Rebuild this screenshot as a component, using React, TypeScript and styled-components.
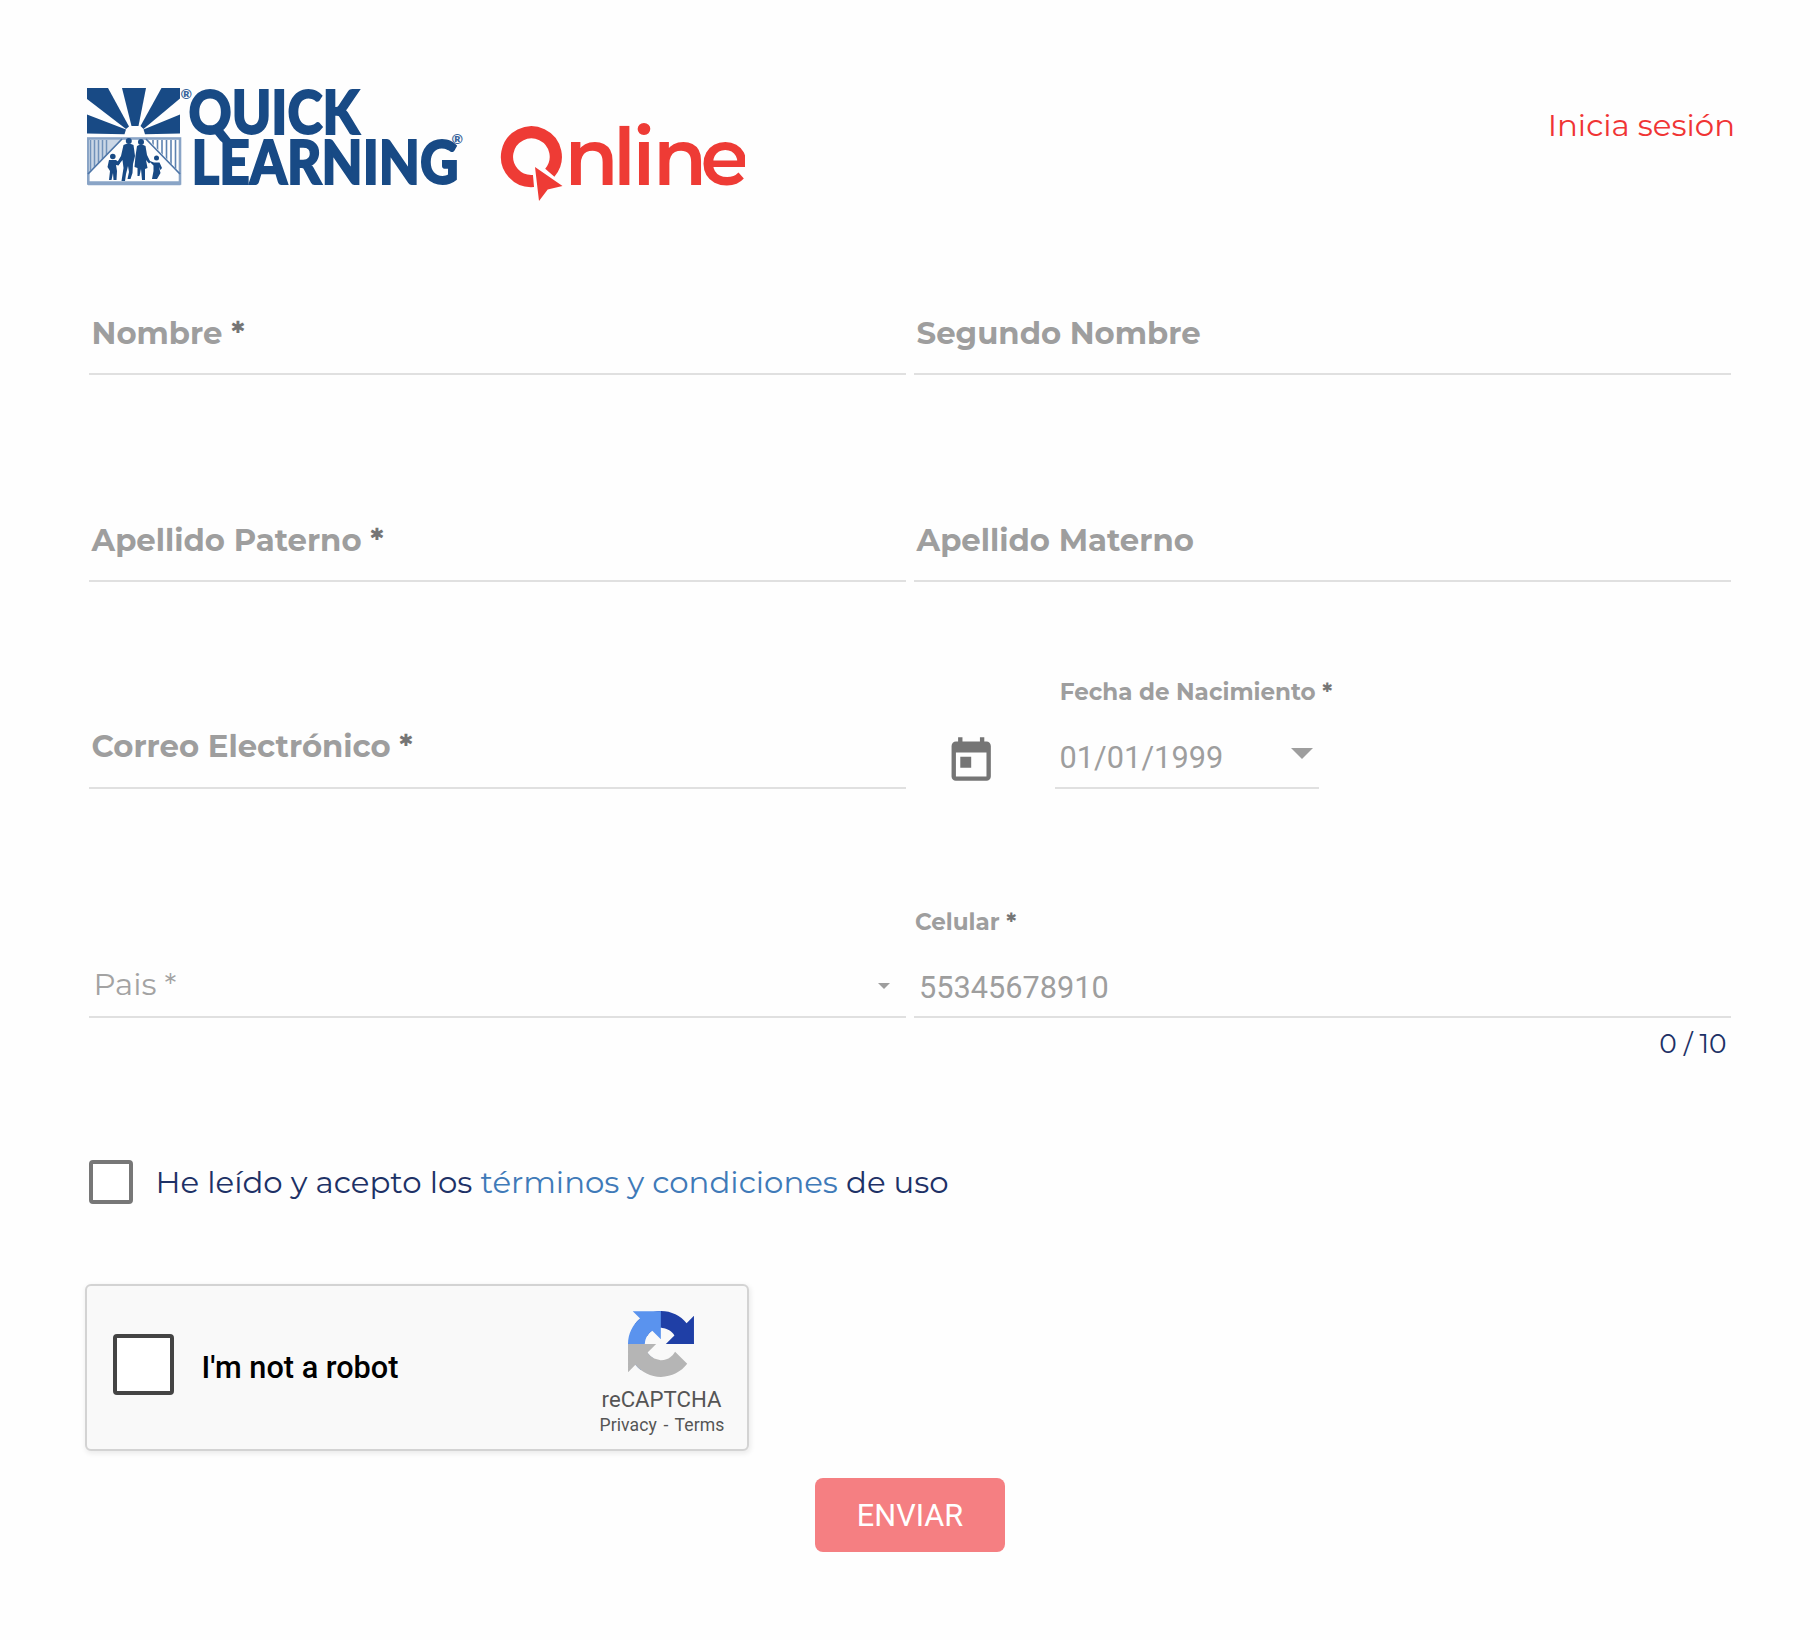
import React from 'react';
import styled, { createGlobalStyle } from 'styled-components';

const sans = `Montserrat, Inter, "Open Sans", sans-serif`;
const roboto = `Roboto, "Liberation Sans", sans-serif`;

const GlobalStyle = createGlobalStyle`
  * { box-sizing: border-box; }
  body { margin: 0; background: #fefefe; font-family: ${sans}; }
`;

const Page = styled.main`
  width: 1820px;
  height: 1640px;
  overflow: hidden;
`;

const Header = styled.header`
  display: flex;
  justify-content: space-between;
  align-items: flex-start;
  height: 240px;
  padding: 80px 85px 0 80px;
`;

const LoginLink = styled.a`
  margin-top: 27px;
  font-size: 30.83px;
  font-weight: 400;
  line-height: 36px;
  color: #f03434;
  text-decoration: none;
`;

const Form = styled.form`
  margin: 0;
  padding-left: 89px;
`;

const FieldRow = styled.div<{ $height: number }>`
  display: grid;
  grid-template-columns: 817px 817px;
  column-gap: 8px;
  height: ${p => p.$height}px;
`;

const Field = styled.div<{ $bottom?: number }>`
  display: flex;
  flex-direction: column;
  justify-content: flex-end;
  padding-bottom: ${p => p.$bottom ?? 22}px;
  border-bottom: 2px solid #e0e0e0;
`;

const Label = styled.label`
  padding-left: 2.6px;
  font-size: 30.76px;
  font-weight: 700;
  line-height: 36px;
  white-space: nowrap;
  color: #9e9e9e;
`;

const SmallLabel = styled(Label)<{ $indent: number; $gap: number }>`
  margin-bottom: ${p => p.$gap}px;
  padding-left: ${p => p.$indent}px;
  font-size: 23.05px;
  line-height: 28px;
`;

const Required = styled.span`
  color: #757575;
`;

const ValueRow = styled.div<{ $left: number; $right: number }>`
  display: flex;
  align-items: center;
  justify-content: space-between;
  height: 36px;
  padding: 0 ${p => p.$right}px 0 ${p => p.$left}px;
`;

const Value = styled.span<{ $weight?: number; $spacing?: number }>`
  font-family: ${roboto};
  font-size: 30.7px;
  font-weight: ${p => p.$weight ?? 400};
  line-height: 36px;
  letter-spacing: ${p => p.$spacing ?? 0}px;
  color: #9e9e9e;
`;

const Placeholder = styled.span`
  font-size: 30.76px;
  font-weight: 400;
  line-height: 36px;
  color: #a3a3a3;
`;

const Caret = styled.i<{ $size: number; $drop: number }>`
  width: 0;
  margin-top: ${p => p.$drop}px;
  border: ${p => p.$size}px solid transparent;
  border-top-color: #9e9e9e;
  border-bottom: 0;
`;

const DateGroup = styled.div`
  display: flex;
  align-items: flex-end;
  padding-left: 31px;
`;

const DateField = styled(Field)`
  width: 264px;
  height: 100%;
  margin-left: 58px;
`;

const CalendarIcon = styled.svg`
  width: 52.4px;
  height: 52.4px;
  margin: 0 -0.4px 1.4px 0;
  fill: #757575;
`;

const Counter = styled.div`
  width: 1642px;
  padding: 11px 4.5px 0 0;
  text-align: right;
  font-size: 26.4px;
  font-weight: 400;
  line-height: 30px;
  color: #1d3166;
`;

const Terms = styled.div`
  display: flex;
  align-items: center;
  gap: 22.5px;
  height: 44px;
  margin-top: 101px;
`;

const Checkbox = styled.span<{ $size: number; $color: string }>`
  flex: none;
  width: ${p => p.$size}px;
  height: ${p => p.$size}px;
  border: 4px solid ${p => p.$color};
  border-radius: 4px;
  background: #fff;
`;

const TermsText = styled.p`
  margin: 0;
  font-size: 30.83px;
  font-weight: 400;
  line-height: 44px;
  white-space: nowrap;
  color: #1d3166;
`;

const TermsLink = styled.a`
  color: #3f7ab8;
`;

const Captcha = styled.section`
  display: flex;
  align-items: flex-start;
  width: 664px;
  height: 167px;
  margin: 80px 0 0 -4px;
  padding: 48px 22px 0 26px;
  border: 2px solid #d3d3d3;
  border-radius: 6px;
  background: #f9f9f9;
  box-shadow: 1px 2px 5px 1px rgba(0, 0, 0, 0.07);
`;

const CaptchaText = styled.span`
  flex: 1;
  margin: 16px 0 0 27.5px;
  font-family: ${roboto};
  font-size: 30.66px;
  font-weight: 460;
  line-height: 36px;
  color: #000;
`;

const CaptchaBrand = styled.div`
  display: flex;
  flex-direction: column;
  align-items: center;
  width: 126px;
  margin-top: -23.5px;
  font-family: ${roboto};
  color: #555;
`;

const CaptchaLogo = styled.svg`
  width: 66px;
  height: 66px;
  margin: 0 0 8.5px -3px;
`;

const BrandName = styled.span`
  margin-left: -1px;
  font-size: 22.2px;
  line-height: 29px;
`;

const BrandLinks = styled.span`
  font-size: 17.6px;
  line-height: 22px;
  letter-spacing: 0.1px;
  word-spacing: 2px;
  white-space: nowrap;
`;

const SubmitButton = styled.button`
  display: block;
  width: 190px;
  height: 74px;
  margin: 27px 0 0 726px;
  padding: 0;
  border: 0;
  border-radius: 8px;
  background: #f57f82;
  font-family: ${roboto};
  font-size: 30.66px;
  font-weight: 400;
  color: #fff;
`;

const Wordmark = styled.text`
  font-family: Lato, "Open Sans", sans-serif;
  font-weight: 900;
  font-size: 60.5px;
  fill: #184a85;
  stroke: #184a85;
  stroke-width: 1.8px;
`;

const OnlineMark = styled.text`
  font-family: ${sans};
  font-weight: 600;
  font-size: 79px;
  fill: #ee3b35;
`;

const Registered = styled.text`
  font-family: Lato, sans-serif;
  font-weight: 900;
  font-size: 14px;
  fill: #3a659c;
`;

const leftSlats = [90.5, 94.5, 98.5, 102.5, 106.5];
const rightSlats = [153, 157.5, 162, 166.5, 171, 175.5];

function Logo() {
  return (
    <svg width="680" height="130" viewBox="80 80 680 130">
      <defs>
        <clipPath id="markEdge"><rect x="480" y="100" width="265" height="110" /></clipPath>
        <clipPath id="leftWall"><path d="M89 140H121L89 172z" /></clipPath>
        <clipPath id="rightWall"><path d="M149 140H180V173z" /></clipPath>
      </defs>
      <g fill="#184a85">
        <path d="M87 88H108L129 126.500L126 129L87 99z" />
        <path d="M122 88H146L138.500 126H131.500z" />
        <path d="M161.500 88H180V98.500L143.500 129L140.500 126z" />
        <path d="M87 114.500L126 129.500L124.500 134.300L87 133.500z" />
        <path d="M180 114.500L143.500 129.500L145 134.300L180 133.500z" />
      </g>
      <rect x="88.300" y="138.500" width="91.700" height="45" fill="none" stroke="#89a4c6" strokeWidth="2.600" />
      <path d="M88 183.200H180.500" stroke="#89a4c6" strokeWidth="4" />
      <path d="M89 140H121L89 172z" fill="#cbd7e6" />
      <g stroke="#7192ba" strokeWidth="1.500" clipPath="url(#leftWall)">
        {leftSlats.map(x => <path key={x} d={`M${x} 140V175`} />)}
      </g>
      <g stroke="#5d82b0" strokeWidth="1.600" clipPath="url(#rightWall)">
        {rightSlats.map(x => <path key={x} d={`M${x} 140V175`} />)}
      </g>
      <path d="M122 139L88 174M146 139L180 174" stroke="#4d75a7" strokeWidth="1.700" fill="none" />
      <g fill="#184a85">
        <circle cx="128.800" cy="141" r="3" />
        <path d="M123.500 145Q128.500 142 133.500 145L135 156L133 164L132.500 173L130.500 179H127.500L129 172L128 166L126 174L125 181H121.500L123.500 168L122.500 160L118.500 165L116.500 163.500L121 156z" />
        <circle cx="141" cy="142" r="3" />
        <path d="M137 146Q141 143 145.500 146L147 155L150.500 162L149 163.500L146 160L147.500 168L145 169L145 180H142L141 169L139.500 176H137.500L137.500 168L134.500 167L135.500 156z" />
        <circle cx="112.800" cy="156.500" r="2.800" />
        <path d="M109 160H116L120 163L118.500 165.500L116 165L117 171L116.500 180H113.500L113 173L111.500 180H109L110 171L107.500 167z" />
        <circle cx="156.500" cy="158" r="2.500" />
        <path d="M148.500 160.500L154 162.500H159.500L162 168L160.500 170L159 167L160.500 173L157 179H154L156 172L154 179H152L153.500 171V165.500z" />
      </g>
      <Registered x="180.500" y="98.500">®</Registered>
      <Wordmark x="188.500" y="134.200" textLength="171" lengthAdjust="spacingAndGlyphs">QUICK</Wordmark>
      <Wordmark x="191.500" y="184.400" textLength="267" lengthAdjust="spacingAndGlyphs">LEARNING</Wordmark>
      <Registered x="451.500" y="144">®</Registered>
      <path
        fill="none" stroke="#ee3b35" strokeWidth="12.200"
        d="M533.500 181A24.400 24.400 0 1 1 549.800 172.700"
      />
      <path d="M535 167L562.500 186L547.700 189.600L539 201z" fill="#ee3b35" stroke="#fefefe" strokeWidth="4" paintOrder="stroke" />
      <g clipPath="url(#markEdge)">
        <OnlineMark y="185.300" x="564.500 613 632.500 653 700.500">nline</OnlineMark>
      </g>
    </svg>
  );
}

export default function App() {
  return (
    <Page>
      <GlobalStyle />
      <Header>
        <Logo />
        <LoginLink>Inicia sesión</LoginLink>
      </Header>
      <Form>
        <FieldRow $height={135}>
          <Field><Label>Nombre <Required>*</Required></Label></Field>
          <Field><Label>Segundo Nombre</Label></Field>
        </FieldRow>
        <FieldRow $height={207}>
          <Field><Label>Apellido Paterno <Required>*</Required></Label></Field>
          <Field><Label>Apellido Materno</Label></Field>
        </FieldRow>
        <FieldRow $height={207}>
          <Field $bottom={23}><Label>Correo Electrónico <Required>*</Required></Label></Field>
          <DateGroup>
            <CalendarIcon viewBox="0 0 24 24">
              <path d="M19 3h-1V1h-2v2H8V1H6v2H5c-1.110 0-1.990.9-1.990 2L3 19c0 1.100.89 2 2 2h14c1.100 0 2-.9 2-2V5c0-1.100-.9-2-2-2zm0 16H5V8h14v11zM7 10h5v5H7z" />
            </CalendarIcon>
            <DateField $bottom={11}>
              <SmallLabel $indent={4.8} $gap={34}>Fecha de Nacimiento <Required>*</Required></SmallLabel>
              <ValueRow $left={4.5} $right={6}>
                <Value $weight={370} $spacing={0.05}>01/01/1999</Value>
                <Caret $size={11} $drop={-9} />
              </ValueRow>
            </DateField>
          </DateGroup>
        </FieldRow>
        <FieldRow $height={229}>
          <Field $bottom={14}>
            <ValueRow $left={4.5} $right={16}>
              <Placeholder>Pais *</Placeholder>
              <Caret $size={6} $drop={4} />
            </ValueRow>
          </Field>
          <Field $bottom={10}>
            <SmallLabel $indent={1} $gap={34}>Celular <Required>*</Required></SmallLabel>
            <ValueRow $left={5} $right={0}><Value>55345678910</Value></ValueRow>
          </Field>
        </FieldRow>
        <Counter>0 / 10</Counter>
        <Terms>
          <Checkbox $size={44} $color="#777" />
          <TermsText>He leído y acepto los <TermsLink>términos y condiciones</TermsLink> de uso</TermsText>
        </Terms>
        <Captcha>
          <Checkbox $size={61} $color="#444" />
          <CaptchaText>I'm not a robot</CaptchaText>
          <CaptchaBrand>
            <CaptchaLogo viewBox="0 0 64 64">
              <path fill="#1f3fa6" d="M64 31.955l-.033-1.370V4.687l-7.160 7.160C50.948 4.674 42.033.093 32.050.093c-10.400 0-19.622 4.960-25.458 12.640l11.736 11.860a15.550 15.550 0 0 1 4.754-5.334c2.050-1.600 4.952-2.906 8.968-2.906.485 0 .86.057 1.135.163 4.976.393 9.288 3.140 11.828 7.124l-8.307 8.307L64 31.953" />
              <path fill="#5a93ee" d="M31.862.094l-1.370.033H4.594l7.160 7.160C4.580 13.147 0 22.060 0 32.046c0 10.400 4.960 19.622 12.640 25.458L24.500 45.768a15.550 15.550 0 0 1-5.334-4.754c-1.600-2.050-2.906-4.952-2.906-8.968 0-.485.057-.86.163-1.135.393-4.976 3.140-9.288 7.124-11.828l8.307 8.307L31.860.095" />
              <path fill="#b5b5b5" d="M.001 32.045l.033 1.370v25.898l7.160-7.160c5.860 7.173 14.774 11.754 24.760 11.754 10.400 0 19.622-4.960 25.458-12.640l-11.736-11.860a15.550 15.550 0 0 1-4.754 5.334c-2.050 1.600-4.952 2.906-8.968 2.906-.485 0-.86-.057-1.135-.163-4.976-.393-9.288-3.140-11.828-7.124l8.307-8.307c-10.522.04-22.400.066-27.295-.005" />
            </CaptchaLogo>
            <BrandName>reCAPTCHA</BrandName>
            <BrandLinks>Privacy - Terms</BrandLinks>
          </CaptchaBrand>
        </Captcha>
        <SubmitButton type="button">ENVIAR</SubmitButton>
      </Form>
    </Page>
  );
}
